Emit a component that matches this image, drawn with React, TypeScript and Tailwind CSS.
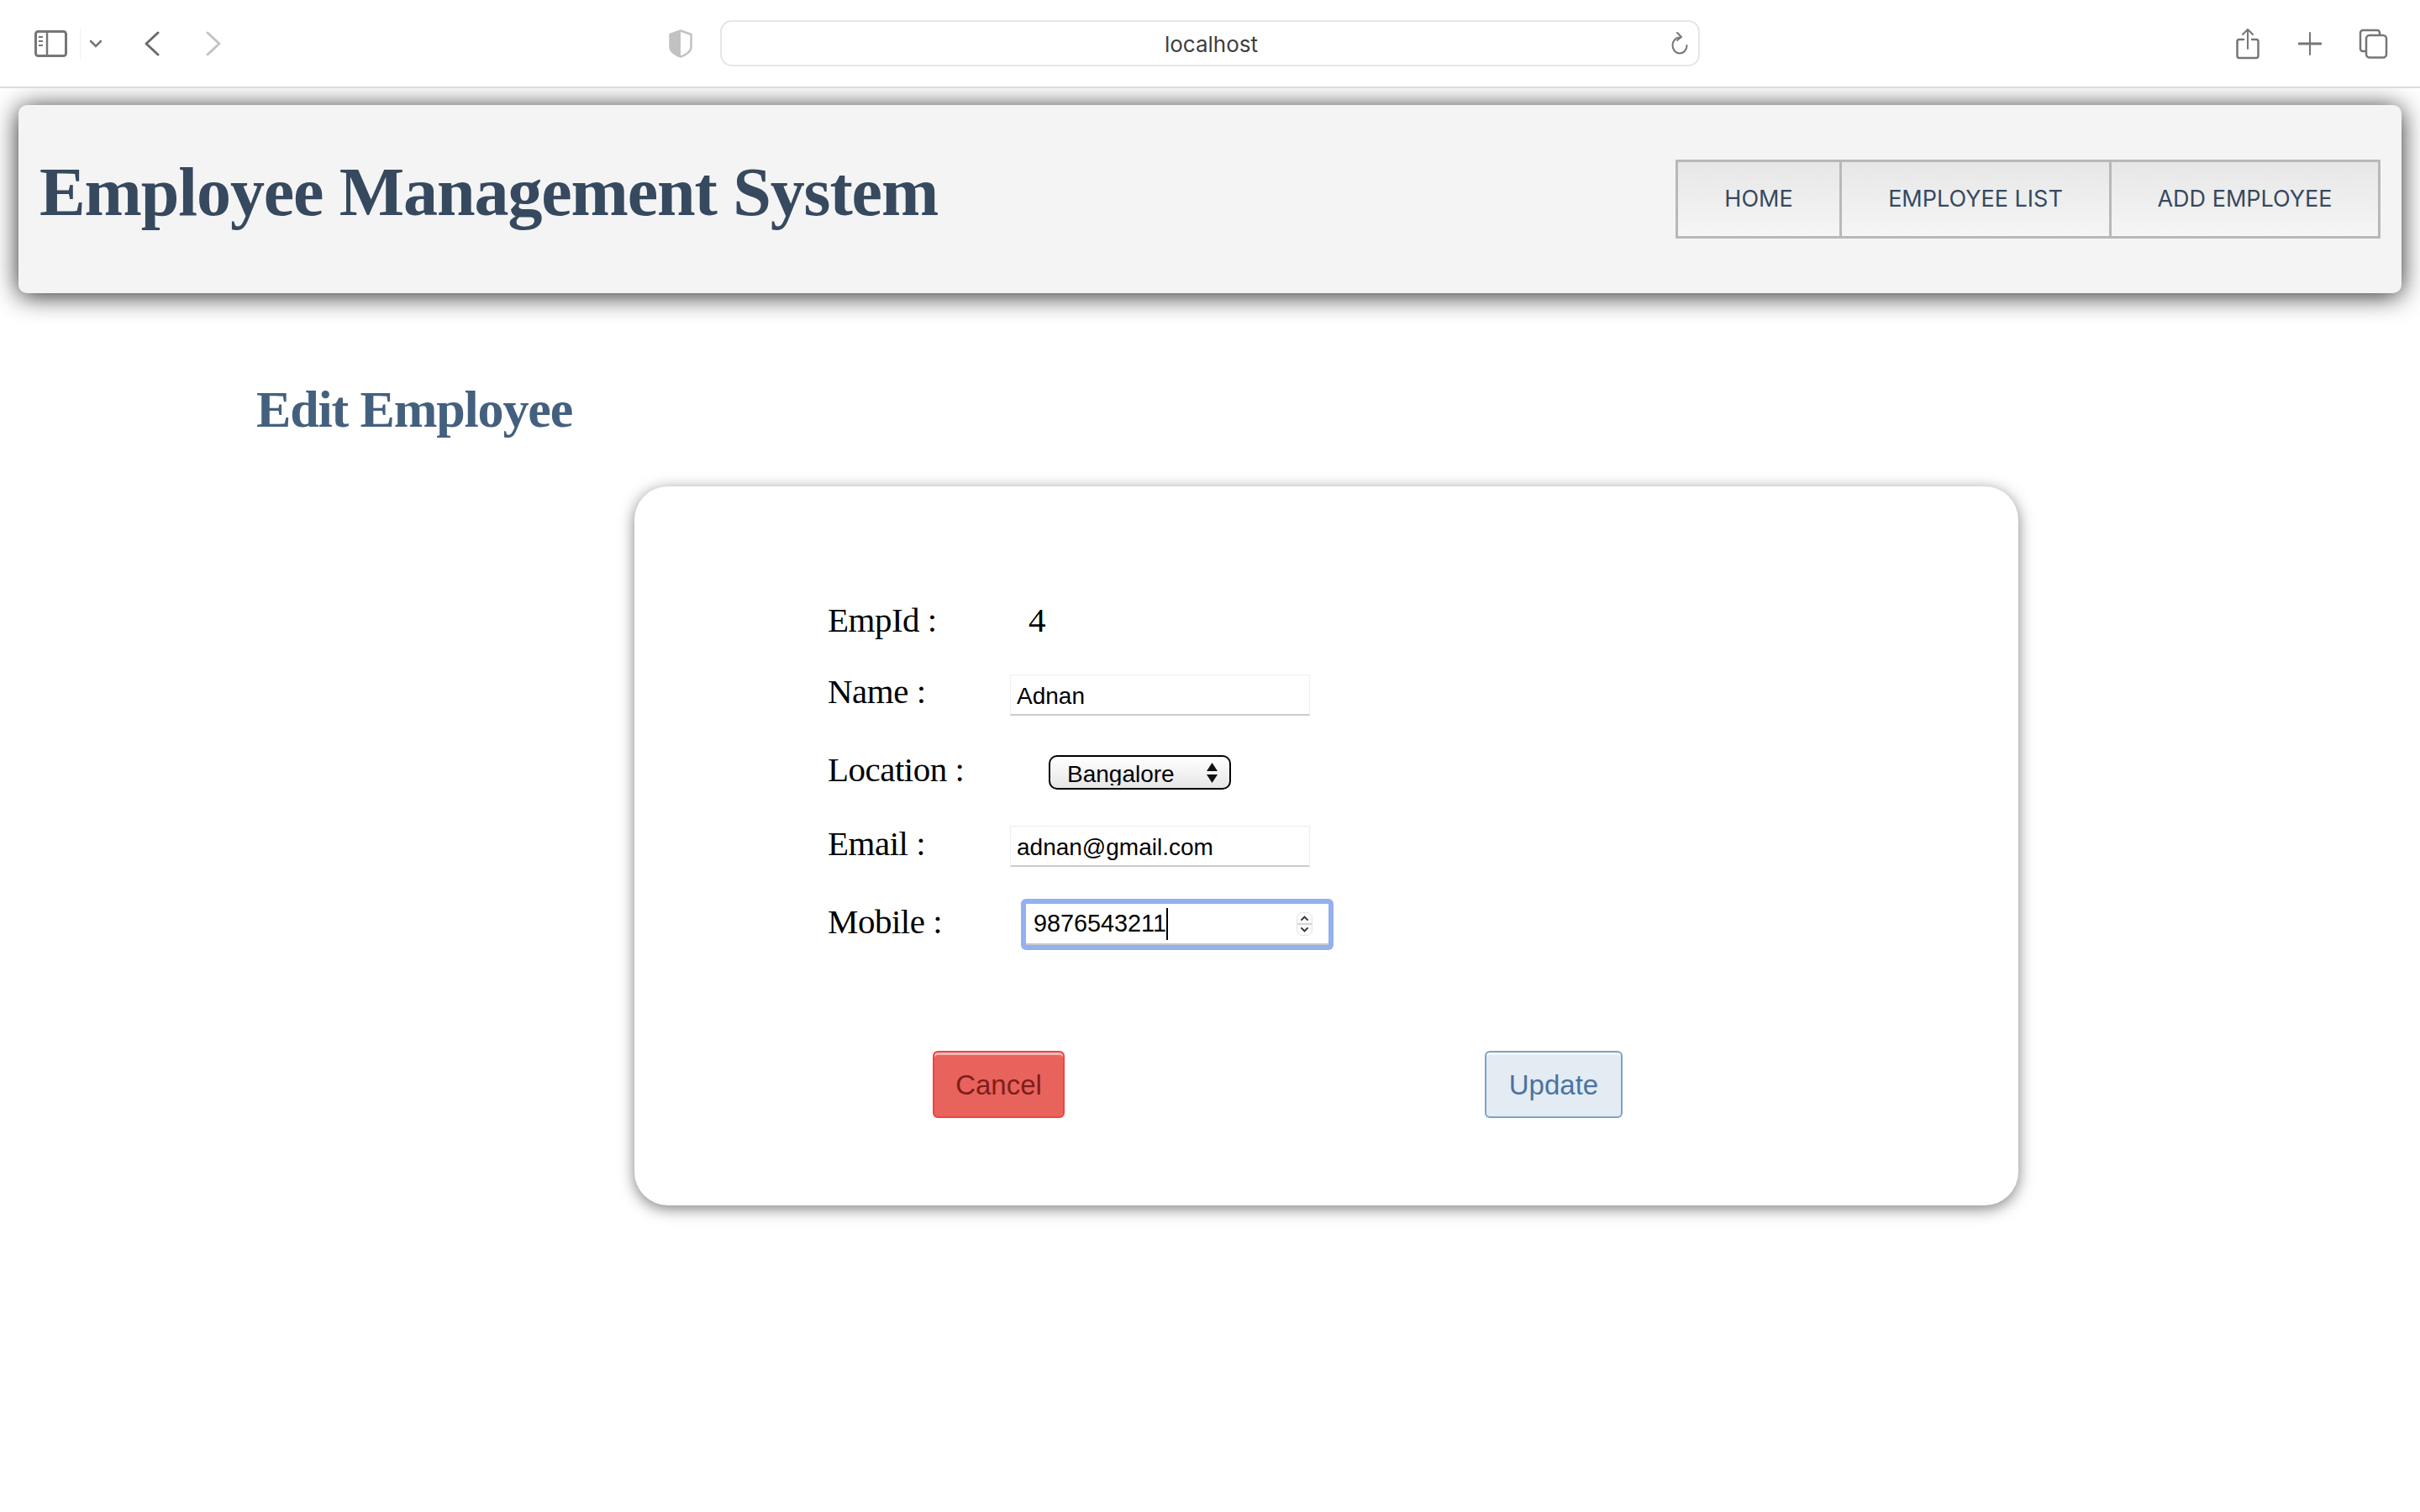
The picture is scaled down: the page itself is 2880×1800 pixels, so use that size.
const sans = "font-['Inter','Liberation_Sans',sans-serif]";
const helv = "font-['Liberation_Sans',sans-serif]";

function Toolbar() {
  return (
    <div className="relative z-10 flex h-[105px] items-center border-b-2 border-[#dcdcdc] bg-white text-[#767676]">
      <svg className="ml-[41px] h-[32px] w-[39px]" viewBox="0 0 39 32" fill="none" stroke="#767676" strokeWidth="3">
        <rect x="1.5" y="1.5" width="36" height="29" rx="3" />
        <path d="M15 2v28" strokeWidth="2.5" />
        <path d="M5 8h5M5 13h5M5 18h5" strokeWidth="2" />
      </svg>
      <div className="ml-[15px] h-[36px] w-px bg-[#eeeeee]" />
      <svg className="ml-[10px] h-[10px] w-[16px]" viewBox="0 0 16 10" fill="none" stroke="#767676" strokeWidth="2.5" strokeLinecap="round">
        <path d="M2 2l6 6 6-6" />
      </svg>
      <svg className="ml-[50px] h-[30px] w-[18px]" viewBox="0 0 18 30" fill="none" stroke="#6b6b6b" strokeWidth="3" strokeLinecap="round" strokeLinejoin="round">
        <path d="M16 2L2 15l14 13" />
      </svg>
      <svg className="ml-[55px] h-[30px] w-[18px]" viewBox="0 0 18 30" fill="none" stroke="#c4c4c4" strokeWidth="3" strokeLinecap="round" strokeLinejoin="round">
        <path d="M2 2l14 13L2 28" />
      </svg>
      <svg className="ml-[533px] h-[34px] w-[28px]" viewBox="0 0 28 34" fill="none">
        <path d="M14 1.5L26.5 6v15c0 5-6 9.500-12.500 11.500C7.500 30.500 1.500 26 1.500 21V6z" stroke="#c2c2c2" strokeWidth="2.500" strokeLinejoin="round" />
        <path d="M14 1.500L1.500 6v15c0 5 6 9.500 12.500 11.500z" fill="#c2c2c2" />
      </svg>
      <div className={`relative ml-[33px] flex h-[55px] w-[1166px] items-center justify-center rounded-[14px] border-2 border-[#e6e6e6] pl-[3px] pt-[2px] text-[26px] text-[#3f3f3f] ${sans}`}>
        localhost
        <svg className="absolute right-[11px] top-[12px] h-[27px] w-[23px]" viewBox="0 0 23 27" fill="none" stroke="#767676" strokeWidth="2" strokeLinecap="round" strokeLinejoin="round">
          <path d="M12 6.500a8.500 9.500 0 1 0 8.500 9.500" />
          <path d="M9 1l5 5-5 4" />
        </svg>
      </div>
      <svg className="ml-[638px] h-[38px] w-[28px]" viewBox="0 0 28 38" fill="none" stroke="#767676" strokeWidth="2.500" strokeLinecap="round" strokeLinejoin="round">
        <path d="M9 14H4a2.500 2.500 0 0 0-2.500 2.500v17A2.500 2.500 0 0 0 4 36h20a2.500 2.500 0 0 0 2.500-2.500v-17A2.500 2.500 0 0 0 24 14h-5" />
        <path d="M14 25V2M8 8l6-6 6 6" strokeWidth="2" />
      </svg>
      <svg className="ml-[46px] h-[28px] w-[28px]" viewBox="0 0 28 28" fill="none" stroke="#767676" strokeLinecap="round">
        <path d="M14 1v26" strokeWidth="2" />
        <path d="M1 14h26" strokeWidth="3" />
      </svg>
      <svg className="ml-[44px] h-[36px] w-[35px]" viewBox="0 0 35 36" fill="none" stroke="#767676" strokeWidth="2.500">
        <path d="M8 27H5a3 3 0 0 1-3-3V5a3 3 0 0 1 3-3h17a3 3 0 0 1 3 3v3" />
        <rect x="9" y="8" width="24" height="26.500" rx="4" />
      </svg>
    </div>
  );
}

function NavLink({ label, width }: { label: string; width: string }) {
  return (
    <a className={`flex h-full items-center justify-center border-y-[3px] border-l-[3px] border-[#b8b8b8] bg-linear-to-b from-[#e7e7e7] to-[#f5f5f5] text-[27px] text-[#36495f] last:border-r-[3px] ${width} ${sans}`}>
      {label}
    </a>
  );
}

function Label({ children, lift = "mb-[6px]" }: { children: string; lift?: string }) {
  return <label className={`${lift} w-[217px] shrink-0 text-[41px] leading-none tracking-[-0.5px] text-black`}>{children}</label>;
}

function TextInput({ value }: { value: string }) {
  return (
    <input
      className={`h-[49px] w-[357px] border border-b-2 border-[#eeeeee] border-b-[#cccccc] bg-white pl-[7px] pt-[3px] text-[28px] text-black outline-none ${helv}`}
      defaultValue={value}
      readOnly
    />
  );
}

export default function App() {
  return (
    <div className="min-h-[1800px] bg-white font-['Liberation_Serif',serif]">
      <Toolbar />
      <header className="mx-[22px] mt-[20px] flex h-[224px] items-center justify-between rounded-[10px] bg-[#f4f4f4] pl-[25px] pr-[25px] shadow-[0_3px_30px_rgba(0,0,0,0.85)]">
        <h1 className="mb-[16px] text-[82px] font-bold leading-none tracking-[-1.1px] text-[#36495f]">Employee Management System</h1>
        <nav className="flex h-[94px]">
          <NavLink label="HOME" width="w-[195px]" />
          <NavLink label="EMPLOYEE LIST" width="w-[321px]" />
          <NavLink label="ADD EMPLOYEE" width="w-[323px]" />
        </nav>
      </header>
      <main className="pl-[305px]">
        <h2 className="mt-[102px] text-[62px] font-bold leading-[72px] tracking-[-1.15px] text-[#44607f]">Edit Employee</h2>
        <div className="ml-[450px] mt-[56px] h-[856px] w-[1647px] rounded-[40px] bg-white pl-[230px] pt-[134px] shadow-[0_4px_18px_rgba(0,0,0,0.5)]">
          <div className="flex h-[50px] items-center pt-[7px]">
            <Label>EmpId :</Label>
            <span className="mb-[6px] ml-[22px] text-[41px] leading-none text-black">4</span>
          </div>
          <div className="mt-[40px] flex h-[49px] items-center">
            <Label lift="mb-[8px]">Name :</Label>
            <TextInput value="Adnan" />
          </div>
          <div className="mt-[47px] flex h-[41px] items-center">
            <Label>Location :</Label>
            <div className="relative ml-[46px]">
              <select className={`block h-[41px] w-[217px] appearance-none rounded-[10px] border-2 border-black bg-linear-to-b from-white to-[#e6e6e6] pb-[3px] pl-[20px] text-[28px] text-black ${helv}`}>
                <option>Bangalore</option>
              </select>
              <svg className="absolute right-[15px] top-[9px] h-[24px] w-[15px]" viewBox="0 0 15 24" fill="#111111">
                <path d="M7.500 0l6.500 10H1zM7.500 24L1 14h13z" />
              </svg>
            </div>
          </div>
          <div className="mt-[43px] flex h-[49px] items-center">
            <Label>Email :</Label>
            <TextInput value="adnan@gmail.com" />
          </div>
          <div className="mt-[38px] flex h-[61px] items-center">
            <Label lift="mb-[7px]">Mobile :</Label>
            <div className="ml-[13px] flex h-[61px] w-[372px] items-center rounded-[6px] border-[6px] border-[#93b0ef] bg-white">
              <div className={`flex h-full w-full items-center border-b-2 border-[#c8c8c8] pl-[9px] pr-[19px] pt-[1px] text-[28.800px] text-black ${helv}`}>
                <span>9876543211</span>
                <span className="h-[38px] w-[2px] bg-black" />
                <svg className="ml-auto h-[28px] w-[19px]" viewBox="0 0 19 28" fill="none">
                  <rect x="0.500" y="0.500" width="18" height="27" rx="6" fill="#fafafa" stroke="#e4e4e4" />
                  <path d="M1 14h17" stroke="#d4d4d4" strokeWidth="2" />
                  <path d="M6 9l3.500-3.500L13 9M6 19l3.500 3.500L13 19" stroke="#333333" strokeWidth="1.800" strokeLinecap="round" />
                </svg>
              </div>
            </div>
          </div>
          <div className={`ml-[125px] mt-[120px] flex text-[33px] ${helv}`}>
            <button className="h-[80px] w-[157px] rounded-[6px] border-2 border-[#ef4444] bg-[#e8635c] pt-[2px] text-[#7f1d1d] shadow-[inset_0_3px_0_rgba(255,255,255,0.55)]">Cancel</button>
            <button className="ml-[500px] h-[80px] w-[164px] rounded-[6px] border-2 border-[#7ba3c8] bg-[#e3ebf3] pt-[2px] text-[#4a74a0] shadow-[inset_0_3px_0_rgba(255,255,255,0.6)]">Update</button>
          </div>
        </div>
      </main>
    </div>
  );
}
